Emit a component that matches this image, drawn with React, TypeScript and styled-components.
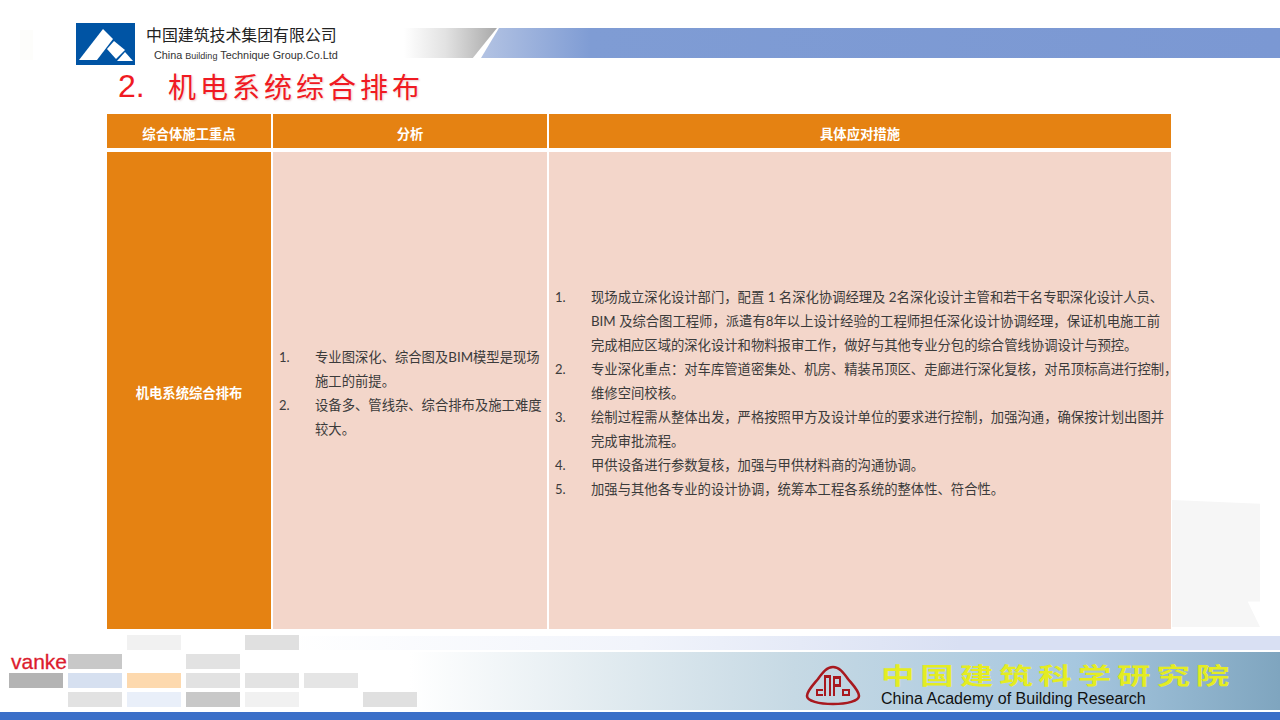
import React from 'react';
import styled, { createGlobalStyle } from 'styled-components';

const CJK = `"Noto Sans CJK SC", sans-serif`;
const BODY = `Lato, "Noto Sans CJK SC", sans-serif`;

const GlobalStyle = createGlobalStyle`
  html, body {
    margin: 0;
    padding: 0;
    background: #fff;
  }
`;

const Page = styled.div`
  position: relative;
  display: flex;
  flex-direction: column;
  width: 1280px;
  height: 720px;
  overflow: hidden;
  background: #fff;
  font-family: ${BODY};
`;

const Watermark = styled.div`
  position: absolute;
  left: 1172px;
  top: 500px;
  width: 88px;
  height: 127px;
  background: #f6f6f6;
  clip-path: polygon(0 0, 100% 3%, 100% 80%, 86% 80%, 100% 100%, 0 100%);
`;

const FaintMark = styled.div`
  position: absolute;
  left: 20px;
  top: 30px;
  width: 13px;
  height: 30px;
  background: #fdfdfb;
`;

const Header = styled.header`
  display: flex;
  align-items: flex-start;
  height: 69px;
  padding: 23px 0 0 76px;
  box-sizing: border-box;
`;

const Logo = styled.svg`
  display: block;
  width: 59px;
  height: 42px;
  flex: none;
`;

const Company = styled.div`
  width: 269px;
  flex: none;
  padding: 3px 0 0 11px;
  box-sizing: border-box;
`;

const CompanyCn = styled.div`
  font-family: ${CJK};
  font-size: 15.9px;
  line-height: 18px;
  color: #222;
  white-space: nowrap;
`;

const CompanyEn = styled.div`
  margin: 4px 0 0 8px;
  font-family: "Liberation Sans", sans-serif;
  font-size: 10.85px;
  line-height: 14px;
  color: #333;
  white-space: nowrap;
  small {
    font-size: 9px;
  }
`;

const Bar = styled.div`
  display: flex;
  flex: 1;
  height: 30px;
  margin-top: 5px;
`;

const BarGrey = styled.div`
  width: 93px;
  flex: none;
  background: linear-gradient(90deg, #fff 0%, #e2e2e2 45%, #a9a9a9 100%);
  clip-path: polygon(0 0, 100% 0, 74% 100%, 0 100%);
`;

const BarBlue = styled.div`
  flex: 1;
  margin-left: -16px;
  background: linear-gradient(90deg, #b3c3e3 0, #7f9cd4 110px, #7b98d3 100%);
  clip-path: polygon(18px 0, 100% 0, 100% 100%, 0 100%);
`;

const Title = styled.h1`
  display: flex;
  align-items: center;
  height: 45px;
  margin: 0;
  padding: 0 0 11px 118px;
  box-sizing: border-box;
  font-family: ${CJK};
  font-size: 28px;
  font-weight: 400;
  color: #f01a22;
  white-space: nowrap;
`;

const TitleNumber = styled.span`
  width: 50px;
  flex: none;
  font-family: "Liberation Sans", sans-serif;
  font-size: 32px;
  font-weight: 400;
`;

const TitleText = styled.span`
  letter-spacing: 4px;
  text-shadow: 1px 1px 2px rgba(120, 0, 0, 0.18);
`;

const Table = styled.div`
  position: relative;
  display: grid;
  grid-template-columns: 164px 274px 622px;
  grid-template-rows: 34px 477px;
  column-gap: 2px;
  row-gap: 4px;
  width: 1064px;
  margin-left: 107px;
`;

const HeadCell = styled.div`
  display: flex;
  align-items: center;
  justify-content: center;
  padding-top: 4px;
  box-sizing: border-box;
  background: #e58212;
  color: #fff;
  font-size: 13.33px;
  font-weight: 700;
`;

const KeyCell = styled(HeadCell)``;

const BodyCell = styled.div`
  display: flex;
  flex-direction: column;
  justify-content: center;
  padding: 4px 0 0 6px;
  box-sizing: border-box;
  background: #f3d6ca;
`;

const Item = styled.div`
  display: flex;
  color: #3b3b3b;
  font-size: 13.33px;
  line-height: 24px;
`;

const ItemNumber = styled.span`
  width: 36px;
  flex: none;
  font-size: 13px;
`;

const ItemLine = styled.div`
  white-space: nowrap;
`;

const Footer = styled.footer`
  position: relative;
  display: flex;
  flex-direction: column;
  flex: 1;
  padding-top: 7px;
  box-sizing: border-box;
`;

const FooterStrip = styled.div`
  height: 14px;
  flex: none;
  background: linear-gradient(90deg, #fff 22%, #f1f4fb 50%, #d9e0f3 75%, #d9e0f3 100%);
`;

const FooterBand = styled.div`
  display: flex;
  align-items: flex-start;
  flex: none;
  height: 58px;
  margin-top: 2px;
  padding: 13px 0 0 805px;
  box-sizing: border-box;
  background: linear-gradient(90deg, #fff 32%, #e6eef2 45%, #c6d9e4 62%, #a6c7df 84%, #7fa5bf 100%);
`;

const FooterBase = styled.div`
  height: 8px;
  flex: none;
  margin-top: 2px;
  background: #3b6fc8;
`;

const Seal = styled.svg`
  display: block;
  width: 56px;
  height: 41px;
  flex: none;
`;

const Academy = styled.div`
  margin-left: 20px;
`;

const AcademyCn = styled.div`
  height: 23px;
  margin-top: -2px;
  font-family: ${CJK};
  font-size: 24px;
  line-height: 23px;
  font-weight: 700;
  color: #e4ec22;
  letter-spacing: 4.1px;
  white-space: nowrap;
  transform: scale(1.4, 0.95);
  transform-origin: left top;
`;

const AcademyEn = styled.div`
  margin-top: 3px;
  font-family: "Liberation Sans", sans-serif;
  font-size: 16.05px;
  line-height: 19px;
  color: #111;
  white-space: nowrap;
`;

const Mosaic = styled.div`
  position: absolute;
  left: 9px;
  top: 6px;
  display: grid;
  grid-template-columns: repeat(7, 54px);
  grid-auto-rows: 15px;
  column-gap: 5px;
  row-gap: 4px;
`;

const Tile = styled.div<{ $c: string; $col: number; $row: number }>`
  grid-column: ${({ $col }) => $col};
  grid-row: ${({ $row }) => $row};
  background: ${({ $c }) => $c};
`;

const Vanke = styled.div`
  grid-column: 1;
  grid-row: 2;
  margin-left: 2px;
  font-family: "Liberation Sans", sans-serif;
  font-size: 21px;
  line-height: 15px;
  color: #dc1c2e;
  -webkit-text-stroke: 0.3px #dc1c2e;
`;

const tiles = [
  { col: 3, row: 1, c: '#f1f1f1' },
  { col: 5, row: 1, c: '#e0e0e0' },
  { col: 2, row: 2, c: '#c8c8c8' },
  { col: 4, row: 2, c: '#e2e2e2' },
  { col: 1, row: 3, c: '#b4b4b4' },
  { col: 2, row: 3, c: '#d6e0f0' },
  { col: 3, row: 3, c: '#fdd9ae' },
  { col: 4, row: 3, c: '#e2e2e2' },
  { col: 5, row: 3, c: '#e3e3e3' },
  { col: 6, row: 3, c: '#e5e5e5' },
  { col: 2, row: 4, c: '#e2e2e2' },
  { col: 3, row: 4, c: '#e9eff9' },
  { col: 4, row: 4, c: '#c8c8c8' },
  { col: 5, row: 4, c: '#f1f1f1' },
  { col: 7, row: 4, c: '#e0e0e0' },
];

const analysis = [
  ['专业图深化、综合图及BIM模型是现场', '施工的前提。'],
  ['设备多、管线杂、综合排布及施工难度', '较大。'],
];

const measures = [
  [
    '现场成立深化设计部门，配置 1 名深化协调经理及 2名深化设计主管和若干名专职深化设计人员、',
    'BIM 及综合图工程师，派遣有8年以上设计经验的工程师担任深化设计协调经理，保证机电施工前',
    '完成相应区域的深化设计和物料报审工作，做好与其他专业分包的综合管线协调设计与预控。',
  ],
  ['专业深化重点：对车库管道密集处、机房、精装吊顶区、走廊进行深化复核，对吊顶标高进行控制，', '维修空间校核。'],
  ['绘制过程需从整体出发，严格按照甲方及设计单位的要求进行控制，加强沟通，确保按计划出图并', '完成审批流程。'],
  ['甲供设备进行参数复核，加强与甲供材料商的沟通协调。'],
  ['加强与其他各专业的设计协调，统筹本工程各系统的整体性、符合性。'],
];

const NumberedList: React.FC<{ items: string[][] }> = ({ items }) => (
  <>
    {items.map((lines, i) => (
      <Item key={i}>
        <ItemNumber>{i + 1}.</ItemNumber>
        <div>
          {lines.map((line) => (
            <ItemLine key={line}>{line}</ItemLine>
          ))}
        </div>
      </Item>
    ))}
  </>
);

const App: React.FC = () => {
  return (
    <Page>
      <GlobalStyle />
      <Watermark />
      <FaintMark />
      <Header>
        <Logo viewBox="0 0 59 42">
          <rect width="59" height="42" fill="#0054a4" />
          <path d="M27 6 37 16 21 37H3Z" fill="#fff" />
          <path d="M38 18 49 27 40 36 31 26Z" fill="#fff" />
          <path d="M49 29 57 38H41Z" fill="#fff" />
        </Logo>
        <Company>
          <CompanyCn>中国建筑技术集团有限公司</CompanyCn>
          <CompanyEn>
            China <small>Building</small> Technique Group.Co.Ltd
          </CompanyEn>
        </Company>
        <Bar>
          <BarGrey />
          <BarBlue />
        </Bar>
      </Header>
      <Title>
        <TitleNumber>2.</TitleNumber>
        <TitleText>机电系统综合排布</TitleText>
      </Title>
      <Table>
        <HeadCell>综合体施工重点</HeadCell>
        <HeadCell>分析</HeadCell>
        <HeadCell>具体应对措施</HeadCell>
        <KeyCell>机电系统综合排布</KeyCell>
        <BodyCell>
          <NumberedList items={analysis} />
        </BodyCell>
        <BodyCell>
          <NumberedList items={measures} />
        </BodyCell>
      </Table>
      <Footer>
        <FooterStrip />
        <FooterBand>
          <Seal viewBox="0 0 56 41">
            <path
              d="M28 2C22 2 18 7 13 14C8 20 2 26 2 31C2 36 14 39 28 39C42 39 54 36 54 31C54 26 48 20 43 14C38 7 34 2 28 2Z"
              fill="none"
              stroke="#a8191f"
              strokeWidth="2.6"
            />
            <path
              fillRule="evenodd"
              d="M11 24h7v2h-5v3h5v2h-7zM19 31V10h7v21h-2V13h-3v18zM28 31V11h8v11h-6v9zM30 14v5h4v-5zM37 24h8v7h-8zM39 26v3h4v-3z"
              fill="#a8191f"
            />
          </Seal>
          <Academy>
            <AcademyCn>中国建筑科学研究院</AcademyCn>
            <AcademyEn>China Academy of Building Research</AcademyEn>
          </Academy>
        </FooterBand>
        <FooterBase />
        <Mosaic>
          {tiles.map((t) => (
            <Tile key={`${t.col}-${t.row}`} $c={t.c} $col={t.col} $row={t.row} />
          ))}
          <Vanke>vanke</Vanke>
        </Mosaic>
      </Footer>
    </Page>
  );
};

export default App;
